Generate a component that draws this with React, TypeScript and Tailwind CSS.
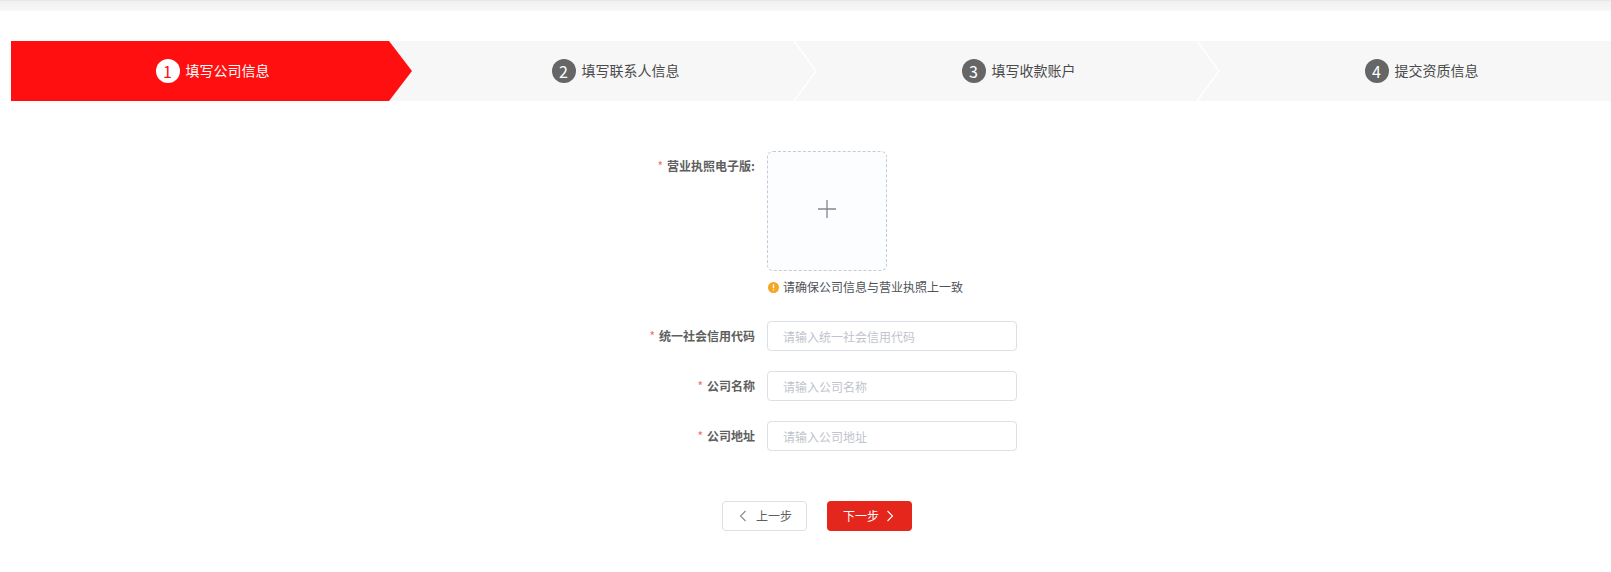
import React from "react";

const font = "font-['Microsoft_YaHei','Noto_Sans_CJK_SC',sans-serif]";

const steps = [
  { n: 1, label: "填写公司信息", active: true },
  { n: 2, label: "填写联系人信息", active: false },
  { n: 3, label: "填写收款账户", active: false },
  { n: 4, label: "提交资质信息", active: false },
];

function Step({ n, label, active, last }: { n: number; label: string; active: boolean; last: boolean }) {
  return (
    <div className="relative flex h-[60px] w-[403px] shrink-0 items-center justify-center">
      {active && (
        <svg className="absolute left-0 top-0" width="402" height="60" viewBox="0 0 402 60">
          <polygon points="0,0 378,0 401,30 378,60 0,60" fill="#ff0f0f" />
        </svg>
      )}
      {!active && !last && (
        <svg className="absolute left-[380px] top-0" width="24" height="60" viewBox="0 0 24 60">
          <polyline points="0,0 22,30 0,60" fill="none" stroke="#ffffff" strokeWidth="1.5" />
        </svg>
      )}
      <div className="relative flex items-center gap-[6px]">
        <span
          className={`flex h-6 w-6 items-center justify-center rounded-full text-base leading-none ${
            active ? "bg-white text-[#ff0f0f]" : "bg-[#666666] text-white"
          }`}
        >
          {n}
        </span>
        <span className={`-mt-[2px] text-sm leading-6 ${active ? "text-white" : "text-[#4a4a4a]"}`}>{label}</span>
      </div>
    </div>
  );
}

function Label({ text, className = "" }: { text: string; className?: string }) {
  return (
    <label className={`w-[755px] shrink-0 text-right text-xs font-bold text-[#5f5f5f] ${className}`}>
      <span className="mr-1 font-normal text-[#f56c6c]">*</span>
      {text}
    </label>
  );
}

function Field({ label, placeholder }: { label: string; placeholder: string }) {
  return (
    <div className="flex items-center gap-3">
      <Label text={label} />
      <input
        readOnly
        placeholder={placeholder}
        className="h-[30px] w-[250px] rounded-[4px] border border-[#dcdfe6] bg-white px-[15px] text-xs outline-none placeholder:text-[#c0c4cc]"
      />
    </div>
  );
}

export default function App() {
  return (
    <div className={`h-[572px] w-full overflow-hidden bg-white ${font}`}>
      <div className="h-[11px] border-t border-[#e8e8e8] bg-gradient-to-b from-[#f0f0f0] to-[#f8f8f8]" />
      <div className="ml-[11px] mt-[30px] flex h-[60px] overflow-hidden bg-[#f7f7f7]">
        {steps.map((s, i) => (
          <Step key={s.n} n={s.n} label={s.label} active={s.active} last={i === steps.length - 1} />
        ))}
      </div>

      <div className="pt-[50px]">
        <div className="flex items-start gap-3">
          <Label text="营业执照电子版:" className="pt-[7px] leading-4" />
          <div>
            <div className="flex h-[120px] w-[120px] items-center justify-center rounded-md border border-dashed border-[#c0ccda] bg-[#fbfdff] pb-[4px]">
              <svg width="20" height="20" viewBox="0 0 20 20" fill="none" stroke="#83898f" strokeWidth="1.3">
                <path d="M10 1v18M1 10h18" />
              </svg>
            </div>
            <div className="mt-2 flex h-4 items-center gap-1 text-xs leading-4 text-[#4f5359]">
              <svg width="11" height="11" viewBox="0 0 11 11" className="ml-[1px] shrink-0">
                <circle cx="5.5" cy="5.5" r="5.5" fill="#f5a623" />
                <rect x="4.8" y="2.2" width="1.4" height="4" rx="0.5" fill="#ffffff" />
                <rect x="4.8" y="7.2" width="1.4" height="1.4" rx="0.5" fill="#ffffff" />
              </svg>
              <span>请确保公司信息与营业执照上一致</span>
            </div>
          </div>
        </div>

        <div className="mt-[26px] flex flex-col gap-5">
          <Field label="统一社会信用代码" placeholder="请输入统一社会信用代码" />
          <Field label="公司名称" placeholder="请输入公司名称" />
          <Field label="公司地址" placeholder="请输入公司地址" />
        </div>

        <div className="ml-[722px] mt-[50px] flex gap-5">
          <button className="flex h-[30px] w-[85px] items-center justify-center gap-[6px] rounded-[4px] border border-[#dcdfe6] bg-white text-xs text-[#5f5f5f]">
            <svg width="8" height="12" viewBox="0 0 8 12" fill="none" stroke="#8a8a8a" strokeWidth="1.1" className="ml-[2px]">
              <path d="M6.5 1L1.5 6l5 5" />
            </svg>
            <span className="ml-[3px]">上一步</span>
          </button>
          <button className="flex h-[30px] w-[85px] items-center justify-center gap-[7px] rounded-[4px] bg-[#e5261c] pr-[2px] text-xs text-white">
            <span>下一步</span>
            <svg width="8" height="12" viewBox="0 0 8 12" fill="none" stroke="#ffffff" strokeWidth="1.1">
              <path d="M1.5 1l5 5-5 5" />
            </svg>
          </button>
        </div>
      </div>
    </div>
  );
}
